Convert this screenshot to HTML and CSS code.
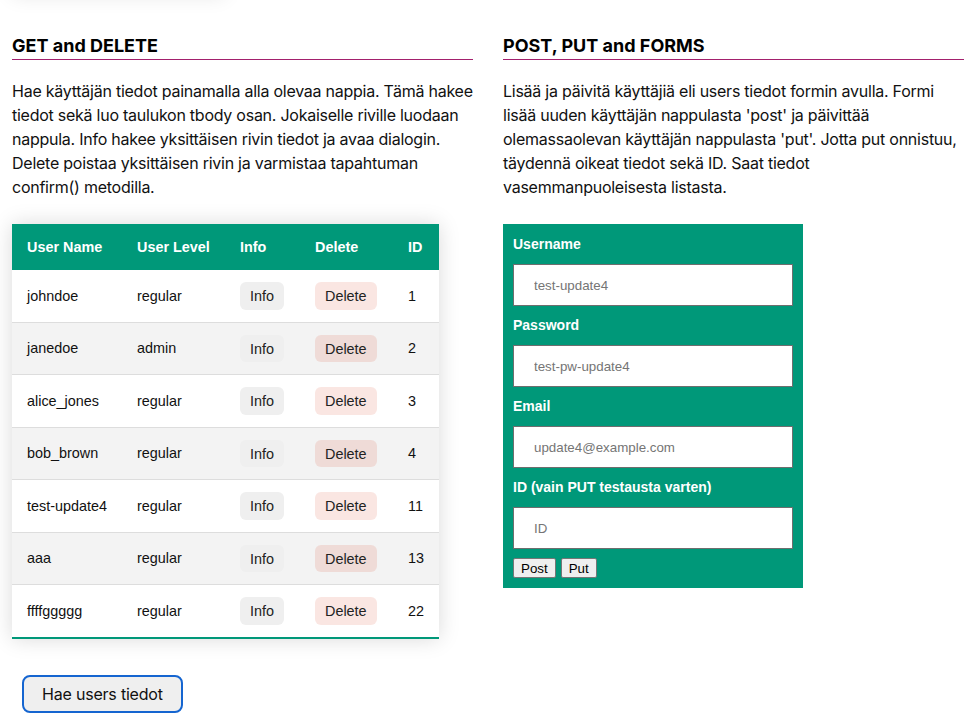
FILE: index.html
```html
<!DOCTYPE html>
<html lang="fi">
<head>
<meta charset="utf-8">
<title>Users</title>
<link rel="stylesheet" href="styles.css">
</head>
<body>
<div class="top-card"></div>
<main class="page">
  <section class="col">
    <h2 class="section-title">GET and DELETE</h2>
    <p class="intro">Hae käyttäjän tiedot painamalla alla olevaa nappia. Tämä hakee tiedot sekä luo taulukon tbody osan. Jokaiselle riville luodaan nappula. Info hakee yksittäisen rivin tiedot ja avaa dialogin. Delete poistaa yksittäisen rivin ja varmistaa tapahtuman confirm() metodilla.</p>
    <table class="styled-table">
      <thead>
        <tr>
          <th class="c-name">User Name</th>
          <th class="c-level">User Level</th>
          <th class="c-info">Info</th>
          <th class="c-del">Delete</th>
          <th class="c-id">ID</th>
        </tr>
      </thead>
      <tbody>
        <tr><td>johndoe</td><td>regular</td><td><button class="btn-info">Info</button></td><td><button class="btn-del">Delete</button></td><td>1</td></tr>
        <tr><td>janedoe</td><td>admin</td><td><button class="btn-info">Info</button></td><td><button class="btn-del">Delete</button></td><td>2</td></tr>
        <tr><td>alice_jones</td><td>regular</td><td><button class="btn-info">Info</button></td><td><button class="btn-del">Delete</button></td><td>3</td></tr>
        <tr><td>bob_brown</td><td>regular</td><td><button class="btn-info">Info</button></td><td><button class="btn-del">Delete</button></td><td>4</td></tr>
        <tr><td>test-update4</td><td>regular</td><td><button class="btn-info">Info</button></td><td><button class="btn-del">Delete</button></td><td>11</td></tr>
        <tr><td>aaa</td><td>regular</td><td><button class="btn-info">Info</button></td><td><button class="btn-del">Delete</button></td><td>13</td></tr>
        <tr><td>ffffggggg</td><td>regular</td><td><button class="btn-info">Info</button></td><td><button class="btn-del">Delete</button></td><td>22</td></tr>
      </tbody>
    </table>
    <button class="fetch-btn">Hae users tiedot</button>
  </section>
  <section class="col">
    <h2 class="section-title">POST, PUT and FORMS</h2>
    <p class="intro">Lisää ja päivitä käyttäjiä eli users tiedot formin avulla. Formi lisää uuden käyttäjän nappulasta 'post' ja päivittää olemassaolevan käyttäjän nappulasta 'put'. Jotta put onnistuu, täydennä oikeat tiedot sekä ID. Saat tiedot vasemmanpuoleisesta listasta.</p>
    <form class="user-form">
      <label for="username">Username</label>
      <input id="username" type="text" placeholder="test-update4">
      <label for="password">Password</label>
      <input id="password" type="text" placeholder="test-pw-update4">
      <label for="email">Email</label>
      <input id="email" type="text" placeholder="update4@example.com">
      <label for="uid">ID (vain PUT testausta varten)</label>
      <input id="uid" type="text" placeholder="ID">
      <div class="form-actions">
        <button type="button" class="small-btn">Post</button>
        <button type="button" class="small-btn">Put</button>
      </div>
    </form>
  </section>
</main>
</body>
</html>
```

FILE: styles.css
```css
html, body {
  margin: 0;
  padding: 0;
  background: #ffffff;
}

body {
  font-family: "Inter", "Noto Sans", sans-serif;
  color: #111111;
}

.top-card {
  width: 213px;
  height: 40px;
  margin: -44px 0 4px 12px;
  background: #ffffff;
  box-shadow: 0 0 20px rgba(0, 0, 0, 0.1);
}

.page {
  display: grid;
  grid-template-columns: 461px 461px;
  column-gap: 30px;
  padding: 0 3px 0 12px;
}

.section-title {
  font-size: 18px;
  line-height: 22px;
  font-weight: 700;
  margin: 35px 0 0;
  padding-bottom: 2px;
  border-bottom: 1px solid #a3206d;
  color: #000000;
  letter-spacing: 0;
}

.intro {
  font-size: 16px;
  line-height: 24px;
  margin: 19px 0 0;
  letter-spacing: -0.25px;
}

.styled-table {
  border-collapse: collapse;
  table-layout: fixed;
  width: 427px;
  margin: 25px 0 0;
  font-family: "Liberation Sans", Arial, sans-serif;
  font-size: 14.4px;
  box-shadow: 0 0 20px rgba(0, 0, 0, 0.15);
}

.styled-table .c-name { width: 80px; }
.styled-table .c-level { width: 73px; }
.styled-table .c-info { width: 45px; }
.styled-table .c-del { width: 63px; }
.styled-table .c-id { width: 16px; }

.styled-table thead tr {
  background: #009879;
  color: #ffffff;
  text-align: left;
}

.styled-table th {
  padding: 15px;
  line-height: 16px;
  font-weight: 700;
  white-space: nowrap;
}

.styled-table td {
  padding: 12px 15px;
  color: #111111;
  white-space: nowrap;
}

.styled-table tbody tr {
  border-bottom: 1px solid #dddddd;
}

.styled-table tbody tr:nth-of-type(even) {
  background: #f3f3f3;
}

.styled-table tbody tr:last-of-type {
  border-bottom: 2px solid #009879;
}

.btn-info,
.btn-del {
  font-family: "Liberation Sans", Arial, sans-serif;
  font-size: 14.4px;
  line-height: 16px;
  padding: 6px 10px 5.5px;
  border: none;
  border-radius: 6px;
  color: #222222;
}

.btn-info {
  background: #efefef;
}

.btn-del {
  background: rgba(220, 60, 30, 0.13);
}

.fetch-btn {
  display: block;
  margin: 36px 0 0 10px;
  padding: 7px 18px;
  font-family: "Inter", "Noto Sans", sans-serif;
  font-size: 16px;
  line-height: 20px;
  letter-spacing: -0.2px;
  color: #111111;
  background: #efefef;
  border: 2px solid #1565d0;
  border-radius: 8px;
}

.user-form {
  width: 300px;
  box-sizing: border-box;
  margin-top: 25px;
  padding: 10px;
  background: #009879;
  font-family: "Liberation Sans", Arial, sans-serif;
}

.user-form label {
  display: block;
  font-size: 14px;
  line-height: 20px;
  font-weight: 700;
  color: #ffffff;
}

.user-form input {
  display: block;
  box-sizing: border-box;
  width: 280px;
  height: 42px;
  margin: 10px 0 9px;
  padding: 0 20px;
  border: 1px solid #6e6e6e;
  background: #ffffff;
  font-family: "Liberation Sans", Arial, sans-serif;
  font-size: 13.33px;
  color: #111111;
}

.user-form input::placeholder {
  color: #757575;
}

.form-actions {
  display: flex;
  gap: 5px;
}

.small-btn {
  height: 20px;
  padding: 0 7px;
  font-family: "Liberation Sans", Arial, sans-serif;
  font-size: 13.33px;
  color: #000000;
  background: #efefef;
  border: 1px solid #767676;
  border-radius: 2px;
}
```
